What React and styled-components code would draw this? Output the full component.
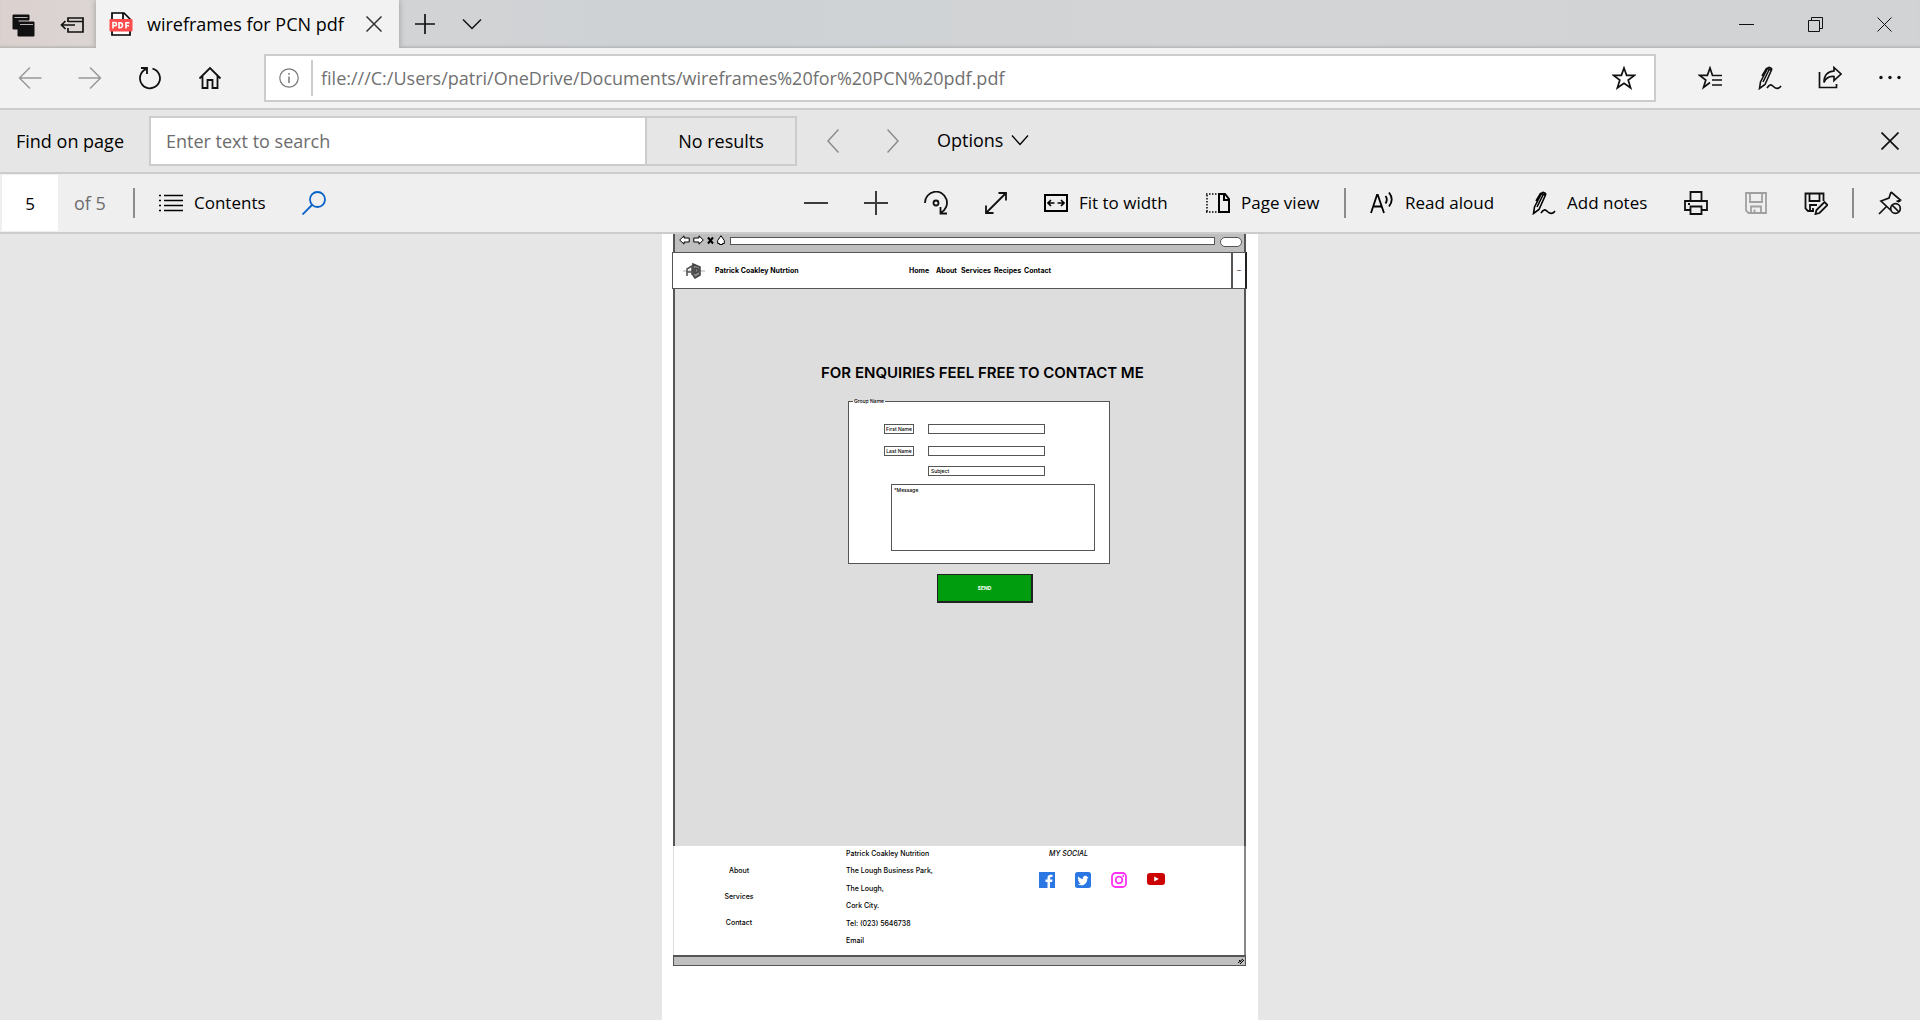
import React from 'react';
import styled, { createGlobalStyle } from 'styled-components';

const GlobalStyle = createGlobalStyle`
  *, *::before, *::after { box-sizing: border-box; }
  body { margin: 0; background: #e6e6e6; color: #000; font-family: "Open Sans", "Noto Sans", sans-serif; font-size: 18px; line-height: 24px; }
  button, input, textarea { font: inherit; color: inherit; margin: 0; padding: 0; border: 0; border-radius: 0; background: none; }
  a { color: inherit; text-decoration: none; }
`;

/* ---------- icons ---------- */
const Glyph = styled.svg`
  display: block;
  flex: none;
  fill: none;
  stroke: currentColor;
  stroke-width: ${(p) => p.$stroke ?? 2};
`;
const Icon = ({ size = 24, w, h, stroke, children }) => (
  <Glyph width={w || size} height={h || size} viewBox={`0 0 ${w || size} ${h || size}`} $stroke={stroke} aria-hidden="true">
    {children}
  </Glyph>
);

const TabsAsideIcon = () => (
  <Icon stroke={1}>
    <path d="M1 2h16v5H6v9H1z" fill="currentColor" />
    <path d="M6 9h16v14H6z" fill="currentColor" />
    <path d="M2.500 4.500h13M8 11.500h13" stroke="#b9b3b3" />
  </Icon>
);
const SetAsideIcon = () => (
  <Icon stroke={1.7}>
    <path d="M8 9V5h15v14H8v-4M8 8.500h15M15 12H1M5.500 8L1.500 12l4 4" />
  </Icon>
);
const PdfIcon = () => (
  <Icon stroke={1.7}>
    <path d="M3 8V1h12l6 6v16H3v-4M14 1v7h7" fill="#fff" />
    <rect x="0.500" y="7" width="23" height="12.500" rx="1" fill="#ff4b4b" stroke="none" />
    <path d="M4 16.500v-6h1.800a1.600 1.600 0 0 1 0 3.300H4M10 10.700v5h1a2.500 2.500 0 0 0 0-5zM17 16.500v-5.800h3.500M17 13.700h3" stroke="#fff" strokeWidth="1.600" />
  </Icon>
);
const CloseIcon = ({ size = 16, stroke = 1.5 }) => (
  <Icon size={size} stroke={stroke}><path d={`M.5.5l${size - 1} ${size - 1}M${size - 0.5}.5L.5 ${size - 0.5}`} /></Icon>
);
const ChevronDown = ({ w = 20, stroke = 1.5 }) => (
  <Icon w={w} h={12} stroke={stroke}><path d={`M1 1.500l${w / 2 - 1} 9 ${w / 2 - 1}-9`} /></Icon>
);
const PlusIcon = ({ size = 20, stroke = 2 }) => (
  <Icon size={size} stroke={stroke}><path d={`M0 ${size / 2}h${size}M${size / 2} 0v${size}`} /></Icon>
);
const MinusIcon = () => <Icon><path d="M0 12h24" /></Icon>;
const BackIcon = () => <Icon stroke={1.5}><path d="M23.500 12H1.500M12 1.500L1.500 12 12 22.500" /></Icon>;
const ForwardIcon = () => <Icon stroke={1.5}><path d="M.5 12h22M12 1.500L22.500 12 12 22.500" /></Icon>;
const RefreshIcon = () => <Icon stroke={1.8}><path d="M14.500 2.600a10 10 0 1 1-6.500.5M3 2h6v6" /></Icon>;
const HomeIcon = () => <Icon stroke={1.8}><path d="M1.500 12.500L12 2l10.500 10.500M4.500 10v12h5v-8h5v8h5V10" /></Icon>;
const InfoIcon = () => (
  <Icon size={20} stroke={1.2}><circle cx="10" cy="10" r="9.200" /><path d="M10 8.500V15M10 5v1.800" strokeWidth="1.500" /></Icon>
);
const StarIcon = () => <Icon stroke={1.7}><path d="M12 2l2.600 7.300 7.900.1-6.300 4.700 2.400 7.700L12 17.200l-6.600 4.600 2.400-7.700-6.300-4.700 7.900-.1z" /></Icon>;
const FavoritesIcon = () => (
  <Icon stroke={1.7}><path d="M12 16.500l-6.500 5 2.300-7.400-6.300-4.700 7.900-.1L12 2l2.500 7.500H24M14 14h10M14 19h10" /></Icon>
);
const PenIcon = () => (
  <Icon stroke={1.6}>
    <path d="M1.500 22.500L2.500 16 9.500 2.500c1-2 5-.8 4 1.500L7 18.500zM4 10l4.500-7.500 5 1.500M11.500 3L5 16" />
    <path d="M9 22c3-5 5-3 7-1s5 2 7-1" />
  </Icon>
);
const ShareIcon = () => (
  <Icon stroke={1.7}><path d="M1.500 6v15.500h17V18M16 1.500l7 6.500-7 6.500v-4C10 10 7.500 12.500 6 16.500 6 9.500 9.500 5.500 16 5z" /></Icon>
);
const MoreIcon = () => (
  <Icon stroke={0}><g fill="currentColor"><circle cx="3" cy="11.500" r="1.700" /><circle cx="12" cy="11.500" r="1.700" /><circle cx="21" cy="11.500" r="1.700" /></g></Icon>
);
const AngleIcon = ({ right }) => <Icon w={12} h={24} stroke={1.5}><path d={right ? 'M.5.5L11 12 .5 23.500' : 'M11.500.5L1 12l10.500 11.500'} /></Icon>;
const ListIcon = () => (
  <Icon stroke={1.6}><path d="M5 4.500h19M5 9.500h19M5 14.500h19M5 19.500h19M0 4.500h2M0 9.500h2M0 14.500h2M0 19.500h2" /></Icon>
);
const SearchIcon = () => <Icon stroke={1.8}><circle cx="15.500" cy="8.500" r="7.500" /><path d="M10 14L.5 23.500" /></Icon>;
const RotateIcon = () => (
  <Icon stroke={1.8}><path d="M1 12a11 11 0 1 1 16 9.500M16.500 16v6.500H23" /><circle cx="12" cy="12" r="2.500" /></Icon>
);
const ExpandIcon = () => <Icon stroke={1.8}><path d="M2 22L22 2M14.500 2H22v7.500M9.500 22H2v-7.500" /></Icon>;
const FitIcon = () => (
  <Icon><path d="M1 4h22v16H1z" /><path d="M4 12h6.500M13.500 12H20M7 9l-3 3 3 3M17 9l3 3-3 3" strokeWidth="1.700" /></Icon>
);
const PageViewIcon = () => (
  <Icon>
    <path d="M13 3h6l4 5v13H13zM18 3v6h5" />
    <path d="M0 3h11M1 4v17M0 21h11" strokeDasharray="1.500 1.500" strokeWidth="1.500" />
  </Icon>
);
const ReadIcon = () => (
  <Icon stroke={1.8}><path d="M1 22L7 4h.8L14 22M3.500 15.500h8M15.500 5c1.600 2 1.600 5 0 7.500M19 1.500c3.500 4.500 3.500 9.500 0 14" /></Icon>
);
const PrintIcon = () => (
  <Icon stroke={1.8}><path d="M6.500 10V1h11v9M6.500 19H1v-9h22v9h-5.500M6.500 15.500h11V23h-11zM4 13h2" /></Icon>
);
const SaveIcon = () => (
  <Icon stroke={1.8}><path d="M2 2h20v20H4.500L2 19.500zM6 2v9h12V2M7 22v-6.500h10V22M10.500 18.500V22" /></Icon>
);
const SaveAsIcon = () => (
  <Icon stroke={1.8}>
    <path d="M10 20H4l-2.500-2.500V2.500h18V10M5.500 2.500V10h10V2.500M6 20v-6h7M9 17v3" />
    <path d="M11.500 23l1-4 8-8 3 3-8 8z" />
  </Icon>
);
const UnpinIcon = () => (
  <Icon stroke={1.7}>
    <path d="M1 23l8-8M13 1l9.500 8-4 1.500M13 1l-2 6-8 3 9.500 9M22.500 9.500L20 11" />
    <circle cx="17.500" cy="17.500" r="4.800" /><path d="M14 14l7 7" />
  </Icon>
);

/* ---------- browser chrome ---------- */
const Browser = styled.div`
  display: flex;
  flex-direction: column;
  min-height: 100vh;
`;
const TabBar = styled.header`
  display: flex;
  height: 48px;
  background: linear-gradient(90deg, #dbd1cf 0, #dbd5d3 96px, #d2d3d5 400px, #ced2d5 700px, #d3d4d5 1200px, #d2d3d5 100%);
  box-shadow: inset 0 -3px 3px -2px #aaa;
`;
const IconButton = styled.button`
  display: flex;
  flex: none;
  align-items: center;
  justify-content: center;
  width: ${(p) => p.$w || 60}px;
  color: ${(p) => p.$color || '#111'};
`;
const TabTools = styled.div`
  display: flex;
  width: 96px;
  padding-top: 1px;
`;
const Tab = styled.div`
  display: flex;
  align-items: center;
  width: 303px;
  padding: 0 17px 0 13px;
  background: #f2f2f2;
  box-shadow: 0 0 6px #999;
  clip-path: inset(0 -6px 0 -6px);
`;
const TabTitle = styled.span`
  flex: 1;
  margin-left: 14px;
  overflow: hidden;
  white-space: nowrap;
`;
const WindowButtons = styled.div`
  display: flex;
  margin-left: auto;
  padding-right: 1px;
`;
const AddressBar = styled.nav`
  display: flex;
  height: 62px;
  background: #f2f2f2;
  border-bottom: 2px solid #ccc;
`;
const AddressBox = styled.div`
  display: flex;
  flex: 1;
  align-items: center;
  height: 48px;
  margin: 6px 24px 0;
  border: 2px solid #ccc;
  background: #fff;
`;
const AddressInput = styled.input`
  flex: 1;
  height: 36px;
  padding-left: 8px;
  border-left: 2px solid #ccc;
  color: #717171;
  outline: 0;
`;
const FindBar = styled.form`
  display: flex;
  align-items: center;
  height: 64px;
  padding-left: 16px;
  border-bottom: 2px solid #ccc;
`;
const FindLabel = styled.label`
  width: 133px;
`;
const FindInput = styled.input`
  width: 498px;
  height: 50px;
  padding: 0 15px;
  border: 2px solid #ccc;
  background: #fff;
  outline: 0;
  &::placeholder { color: #6d6d6d; opacity: 1; }
`;
const FindResult = styled.output`
  display: flex;
  align-items: center;
  justify-content: center;
  width: 150px;
  height: 50px;
  margin-right: 6px;
  border: 2px solid #ccc;
  border-left: 0;
`;
const OptionsButton = styled.button`
  display: flex;
  align-items: center;
  gap: 8px;
  margin: 0 auto 0 14px;
  padding-bottom: 2px;
`;
const PdfBar = styled.div`
  display: flex;
  align-items: center;
  height: 60px;
  padding-left: 2px;
  background: #efefef;
  border-bottom: 2px solid #ccc;
  font-size: 17px;
`;
const PageInput = styled.input`
  width: 56px;
  height: 56px;
  background: #fff;
  text-align: center;
  outline: 0;
`;
const PageCount = styled.label`
  width: 75px;
  padding-left: 16px;
  color: #6d6d6d;
  font-size: 18px;
`;
const Divider = styled.i`
  flex: none;
  width: 2px;
  height: 30px;
  margin-right: ${(p) => (p.$spaced ? 6 : 0)}px;
  margin-left: ${(p) => (p.$spaced ? 6 : 0)}px;
  background: #8c8c8c;
`;
const ToolGroup = styled.div`
  display: flex;
  align-items: center;
  align-self: stretch;
  margin-left: ${(p) => (p.$end ? 'auto' : '0')};
  & > button { align-self: stretch; }
`;
const ToolButton = styled.button`
  display: flex;
  flex: none;
  align-items: center;
  gap: 11px;
  width: ${(p) => p.$w}px;
  padding-left: ${(p) => p.$pad}px;
  white-space: nowrap;
`;

/* ---------- document ---------- */
const ink = '#555';
const Viewer = styled.main`
  display: flex;
  flex: 1;
  justify-content: center;
`;
const Sheet = styled.article`
  width: 596px;
  padding: 0 12px 54px 11px;
  background: #fff;
  font: 500 7px/10px Inter, "Liberation Sans", sans-serif;
`;
const MockHeader = styled.div`
  display: flex;
  align-items: center;
  gap: 3px;
  height: 18px;
  padding: 0 2px 6px 4px;
  background: #bfbfbf;
  border: solid ${ink};
  border-width: 0 2px;
`;
const MockAddress = styled.div`
  flex: 1;
  height: 8px;
  margin: 2px 2px 0 2px;
  border: 1px solid ${ink};
  background: #fff;
`;
const SearchPill = styled.div`
  width: 22px;
  height: 10px;
  margin-top: 3px;
  border: 1px solid ${ink};
  border-radius: 8px;
  background: #fff;
`;
const MockNav = styled.div`
  display: flex;
  align-items: center;
  height: 37px;
  margin: 0 -1px;
  padding-left: 9px;
  border: 1px solid ${ink};
  border-right: 2px solid #222;
  font-weight: 700;
`;
const Brand = styled.span`
  width: 194px;
  margin-left: 9px;
`;
const MenuLink = styled.a`
  width: ${(p) => p.$w}px;
  white-space: nowrap;
`;
const NavToggle = styled.button`
  align-self: stretch;
  width: 14px;
  margin-left: auto;
  border-left: 2px solid ${ink};
  color: #555;
`;
const MockBody = styled.section`
  display: flex;
  flex-direction: column;
  min-height: 557px;
  padding: 74px 0 20px 173px;
  background: #ddd;
  border: solid ${ink};
  border-width: 0 2px 0 2px;
`;
const Heading = styled.h1`
  margin: 0 0 16px -27px;
  font-size: 15px;
  font-weight: 600;
  line-height: 20px;
  white-space: nowrap;
`;
const ContactForm = styled.form`
  display: flex;
  flex-direction: column;
  align-items: flex-start;
`;
const Group = styled.fieldset`
  width: 262px;
  height: 165px;
  margin: 0;
  padding: 20px 0 0 35px;
  border: 1px solid ${ink};
  background: #fff;
`;
const Legend = styled.legend`
  margin-left: -31px;
  padding: 0 1px;
  font-size: 5px;
  line-height: 5px;
`;
const Field = styled.div`
  display: grid;
  grid-template-columns: 30px 117px;
  gap: 14px;
  align-items: center;
  margin-bottom: ${(p) => p.$gap}px;
`;
const FieldLabel = styled.label`
  height: 10px;
  border: 1px solid ${ink};
  font-size: 5px;
  line-height: 8px;
  text-align: center;
  white-space: nowrap;
`;
const FieldInput = styled.input`
  grid-column: 2;
  width: 100%;
  height: 10px;
  padding: 0 2px;
  border: 1px solid ${ink};
  font-size: 5px;
  line-height: 8px;
  &::placeholder { color: #000; opacity: 1; }
`;
const MessageBox = styled.textarea`
  display: block;
  width: 204px;
  height: 67px;
  margin-left: 7px;
  padding: 2px;
  border: 1px solid ${ink};
  font-size: 5px;
  line-height: 6px;
  resize: none;
  &::placeholder { color: #000; opacity: 1; }
`;
const SendButton = styled.button`
  width: 96px;
  height: 29px;
  margin: 10px 0 0 89px;
  border: 1px solid #222;
  border-width: 1px 2px 2px 1px;
  background: #009e0f;
  color: #fff;
  font-size: 5px;
  font-weight: 700;
`;
const MockFooter = styled.footer`
  display: grid;
  grid-template-columns: 128px 172px 1fr;
  column-gap: 21px;
  height: 109px;
  padding-left: 1px;
  border-right: 2px solid #888;
  border-left: 1px solid #ddd;
`;
const FooterLinks = styled.nav`
  display: flex;
  flex-direction: column;
  align-items: center;
  gap: 16px;
  padding-top: 20px;
`;
const Address = styled.address`
  display: flex;
  flex-direction: column;
  justify-content: space-between;
  height: 100px;
  padding: 3px 0 0 22px;
  font-style: normal;
`;
const Social = styled.div`
  padding: 3px 0 0 22px;
`;
const SocialTitle = styled.p`
  margin: 0 0 13px 10px;
  font-style: italic;
`;
const SocialIcons = styled.div`
  display: flex;
  gap: 20px;
`;
const StatusStrip = styled.div`
  display: flex;
  align-items: center;
  justify-content: flex-end;
  height: 11px;
  border: 1px solid ${ink};
  border-top-width: 2px;
  background: #bfbfbf;
`;

const MenuItems = [['Home', 27], ['About', 25], ['Services', 33], ['Recipes', 30], ['Contact', 30]];

export default function App() {
  return (
    <Browser>
      <GlobalStyle />
      <TabBar>
        <TabTools>
          <IconButton $w={48} aria-label="Tabs set aside"><TabsAsideIcon /></IconButton>
          <IconButton $w={48} aria-label="Set tabs aside"><SetAsideIcon /></IconButton>
        </TabTools>
        <Tab>
          <PdfIcon />
          <TabTitle>wireframes for PCN pdf</TabTitle>
          <IconButton $w={16} $color="#333" aria-label="Close tab"><CloseIcon /></IconButton>
        </Tab>
        <IconButton $w={52} aria-label="New tab"><PlusIcon stroke={1.7} /></IconButton>
        <IconButton $w={42} aria-label="Tab previews"><ChevronDown /></IconButton>
        <WindowButtons>
          <IconButton $w={69} aria-label="Minimize"><Icon size={15} stroke={1}><path d="M0 7.500h15" /></Icon></IconButton>
          <IconButton $w={69} aria-label="Restore"><Icon size={15} stroke={1}><path d="M.5 3.500h11v11H.5zM3.500 3.500v-3h11v11h-3" /></Icon></IconButton>
          <IconButton $w={69} aria-label="Close window"><CloseIcon size={15} stroke={1} /></IconButton>
        </WindowButtons>
      </TabBar>

      <AddressBar>
        <IconButton $color="#999" aria-label="Back"><BackIcon /></IconButton>
        <IconButton $color="#999" aria-label="Forward"><ForwardIcon /></IconButton>
        <IconButton aria-label="Refresh"><RefreshIcon /></IconButton>
        <IconButton aria-label="Home"><HomeIcon /></IconButton>
        <AddressBox>
          <IconButton $w={45} $color="#777" aria-label="Site information"><InfoIcon /></IconButton>
          <AddressInput aria-label="Address" defaultValue="file:///C:/Users/patri/OneDrive/Documents/wireframes%20for%20PCN%20pdf.pdf" />
          <IconButton aria-label="Add to favorites"><StarIcon /></IconButton>
        </AddressBox>
        <IconButton aria-label="Favorites"><FavoritesIcon /></IconButton>
        <IconButton aria-label="Make a note"><PenIcon /></IconButton>
        <IconButton aria-label="Share"><ShareIcon /></IconButton>
        <IconButton aria-label="More"><MoreIcon /></IconButton>
      </AddressBar>

      <FindBar onSubmit={(e) => e.preventDefault()}>
        <FindLabel htmlFor="find">Find on page</FindLabel>
        <FindInput id="find" placeholder="Enter text to search" />
        <FindResult>No results</FindResult>
        <IconButton type="button" $color="#8c8c8c" aria-label="Previous result"><AngleIcon /></IconButton>
        <IconButton type="button" $color="#8c8c8c" aria-label="Next result"><AngleIcon right /></IconButton>
        <OptionsButton type="button">Options <ChevronDown w={18} stroke={1.3} /></OptionsButton>
        <IconButton type="button" aria-label="Close find bar"><CloseIcon size={18} stroke={1.7} /></IconButton>
      </FindBar>

      <PdfBar>
        <PageInput id="page" defaultValue="5" />
        <PageCount htmlFor="page">of 5</PageCount>
        <Divider />
        <ToolGroup>
          <ToolButton $w={149} $pad={24}><ListIcon />Contents</ToolButton>
          <IconButton $color="#0a63c9" aria-label="Find"><SearchIcon /></IconButton>
        </ToolGroup>
        <ToolGroup $end>
          <IconButton $color="#3c3c3c" aria-label="Zoom out"><MinusIcon /></IconButton>
          <IconButton $color="#3c3c3c" aria-label="Zoom in"><PlusIcon size={24} /></IconButton>
          <IconButton aria-label="Rotate"><RotateIcon /></IconButton>
          <IconButton aria-label="Full screen"><ExpandIcon /></IconButton>
          <ToolButton $w={168} $pad={18}><FitIcon />Fit to width</ToolButton>
          <ToolButton $w={150} $pad={12}><PageViewIcon />Page view</ToolButton>
          <Divider />
          <ToolButton $w={168} $pad={24}><ReadIcon />Read aloud</ToolButton>
          <ToolButton $w={152} $pad={18}><PenIcon />Add notes</ToolButton>
          <IconButton aria-label="Print"><PrintIcon /></IconButton>
          <IconButton $color="#a0a0a0" aria-label="Save"><SaveIcon /></IconButton>
          <IconButton aria-label="Save as"><SaveAsIcon /></IconButton>
          <Divider $spaced />
          <IconButton aria-label="Unpin toolbar"><UnpinIcon /></IconButton>
        </ToolGroup>
      </PdfBar>

      <Viewer>
        <Sheet>
          <MockHeader>
            <Icon w={11} h={10} stroke={1}><path d="M.7 5L5 .8v2.200h5.200v4H5v2.200z" fill="#fff" /></Icon>
            <Icon w={11} h={10} stroke={1}><path d="M10.300 5L6 .8v2.200H.8v4H6v2.200z" fill="#fff" /></Icon>
            <Icon w={7} h={9} stroke={2}><path d="M1 1.500l5 6M6 1.500l-5 6" /></Icon>
            <Icon w={8} h={10} stroke={1}><path d="M4 .7L7.300 5.500v3H5.500v1h-3v-1H.7v-3z" fill="#fff" /></Icon>
            <MockAddress />
            <SearchPill />
          </MockHeader>
          <MockNav>
            <Icon w={24} h={16} stroke={1.6}>
              <path d="M1 8h22" stroke="#ccc" />
              <path d="M5 13V6l5-3v9M5 9h5" stroke="#555" />
              <path d="M11 1l7 3v8l-5 3-2-3zM13 5v6M13 5l3 1v3l-3 1" fill="#888" stroke="#444" />
            </Icon>
            <Brand>Patrick Coakley Nutrtion</Brand>
            {MenuItems.map(([name, w]) => <MenuLink key={name} href="#" $w={w}>{name}</MenuLink>)}
            <NavToggle aria-label="Menu">–</NavToggle>
          </MockNav>
          <MockBody>
            <Heading>FOR ENQUIRIES FEEL FREE TO CONTACT ME</Heading>
            <ContactForm onSubmit={(e) => e.preventDefault()}>
              <Group>
                <Legend>Group Name</Legend>
                <Field $gap={12}><FieldLabel htmlFor="first">First Name</FieldLabel><FieldInput id="first" /></Field>
                <Field $gap={10}><FieldLabel htmlFor="last">Last Name</FieldLabel><FieldInput id="last" /></Field>
                <Field $gap={8}><FieldInput aria-label="Subject" placeholder="Subject" /></Field>
                <MessageBox aria-label="Message" placeholder="*Message" />
              </Group>
              <SendButton>SEND</SendButton>
            </ContactForm>
          </MockBody>
          <MockFooter>
            <FooterLinks>
              <a href="#">About</a>
              <a href="#">Services</a>
              <a href="#">Contact</a>
            </FooterLinks>
            <Address>
              <span>Patrick Coakley Nutrition</span>
              <span>The Lough Business Park,</span>
              <span>The Lough,</span>
              <span>Cork City.</span>
              <span>Tel: (023) 5646738</span>
              <a href="#">Email</a>
            </Address>
            <Social>
              <SocialTitle>MY SOCIAL</SocialTitle>
              <SocialIcons>
                <a href="#" aria-label="Facebook">
                  <Icon size={16} stroke={0}><path d="M0 0h16v16H0z" fill="#2b78e4" /><path d="M8.500 16v-6H6.500V7.500h2V6c0-2 1.200-3.200 3.200-3.200h1.800v2.300h-1.200c-.9 0-1.200.4-1.200 1.200v1.200h2.400L13.100 10H11v6z" fill="#fff" /></Icon>
                </a>
                <a href="#" aria-label="Twitter">
                  <Icon size={16} stroke={0}><rect width="16" height="16" rx="2.500" fill="#2b78e4" /><path d="M13.500 4.700c-.4.200-.8.300-1.200.4a2.300 2.300 0 0 0-4.200 2C6 7 4.500 6 3.200 4.500c-.6 1.200-.3 2.500.7 3.200l-1-.3c0 1.200.8 2 1.900 2.300h-1c.3 1 1.100 1.600 2.200 1.600-1 .8-2.100 1.100-3.400 1 4.600 2.500 9.800 0 9.700-5.900.5-.4.900-.9 1.200-1.700z" fill="#fff" /></Icon>
                </a>
                <a href="#" aria-label="Instagram">
                  <Icon size={16} stroke={1.8}><g stroke="#ff32f5"><rect x="1" y="1" width="14" height="14" rx="3.500" /><circle cx="8" cy="8" r="3.300" /><path d="M11.500 4h1.500" /></g></Icon>
                </a>
                <a href="#" aria-label="YouTube">
                  <Icon w={18} h={14} stroke={0}><rect y="1" width="18" height="12" rx="3" fill="#c00" /><path d="M7.200 4.500v5l4.600-2.500z" fill="#fff" /></Icon>
                </a>
              </SocialIcons>
            </Social>
          </MockFooter>
          <StatusStrip><Icon size={8} stroke={1}><path d="M1 6l5-4M3 7l4-4M2 3l3 3" /></Icon></StatusStrip>
        </Sheet>
      </Viewer>
    </Browser>
  );
}
